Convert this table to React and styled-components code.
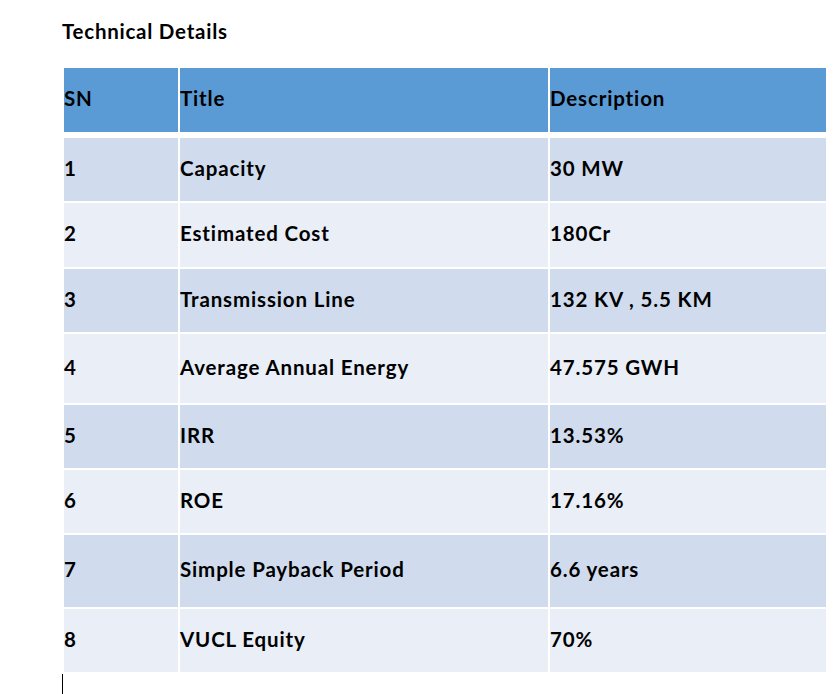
import React from "react";
import styled, { createGlobalStyle } from "styled-components";

const GlobalStyle = createGlobalStyle`
  html, body {
    margin: 0;
    padding: 0;
    background: #ffffff;
  }
  body {
    font-family: Lato, "Open Sans", "Liberation Sans", sans-serif;
    color: #000000;
  }
`;

const Page = styled.div`
  width: 838px;
  height: 694px;
  overflow: hidden;
  padding: 19px 0 0 62px;
  box-sizing: border-box;
`;

const Title = styled.h1`
  margin: 0 0 25px 0;
  font-size: 20.5px;
  line-height: 24px;
  font-weight: 700;
  letter-spacing: 0.75px;
`;

const Table = styled.div`
  display: flex;
  flex-direction: column;
  gap: 2px;
  margin-left: 2px;
  width: 762px;
`;

const Row = styled.div`
  display: grid;
  grid-template-columns: 114px 368px 276px;
  column-gap: 2px;
  height: ${(p) => p.$h}px;
  margin-bottom: ${(p) => (p.$head ? 4 : 0)}px;
`;

const bg = {
  head: "#5b9bd5",
  odd: "#d0dcee",
  even: "#e9eef7",
};

const Cell = styled.div`
  display: flex;
  align-items: center;
  padding-bottom: ${(p) => (p.$tone === "head" ? 5 : 4)}px;
  box-sizing: border-box;
  background: ${(p) => bg[p.$tone]};
  font-size: 20.5px;
  line-height: 24px;
  font-weight: 700;
  letter-spacing: 0.85px;
  white-space: nowrap;
`;

const Caret = styled.div`
  width: 1px;
  height: 20px;
  margin-top: 2px;
  background: #000000;
`;

const rows = [
  ["1", "Capacity", "30 MW", 63],
  ["2", "Estimated Cost", "180Cr", 64],
  ["3", "Transmission Line", "132 KV , 5.5 KM", 63],
  ["4", "Average Annual Energy", "47.575 GWH", 69],
  ["5", "IRR", "13.53%", 63],
  ["6", "ROE", "17.16%", 63],
  ["7", "Simple Payback Period", "6.6 years", 72],
  ["8", "VUCL Equity", "70%", 63],
];

export default function App() {
  return (
    <>
      <GlobalStyle />
      <Page>
        <Title>Technical Details</Title>
        <Table>
          <Row $h={64} $head>
            <Cell $tone="head">SN</Cell>
            <Cell $tone="head">Title</Cell>
            <Cell $tone="head">Description</Cell>
          </Row>
          {rows.map(([sn, title, desc, h], i) => {
            const tone = i % 2 === 0 ? "odd" : "even";
            return (
              <Row key={sn} $h={h}>
                <Cell $tone={tone}>{sn}</Cell>
                <Cell $tone={tone}>{title}</Cell>
                <Cell $tone={tone}>{desc}</Cell>
              </Row>
            );
          })}
        </Table>
        <Caret />
      </Page>
    </>
  );
}
